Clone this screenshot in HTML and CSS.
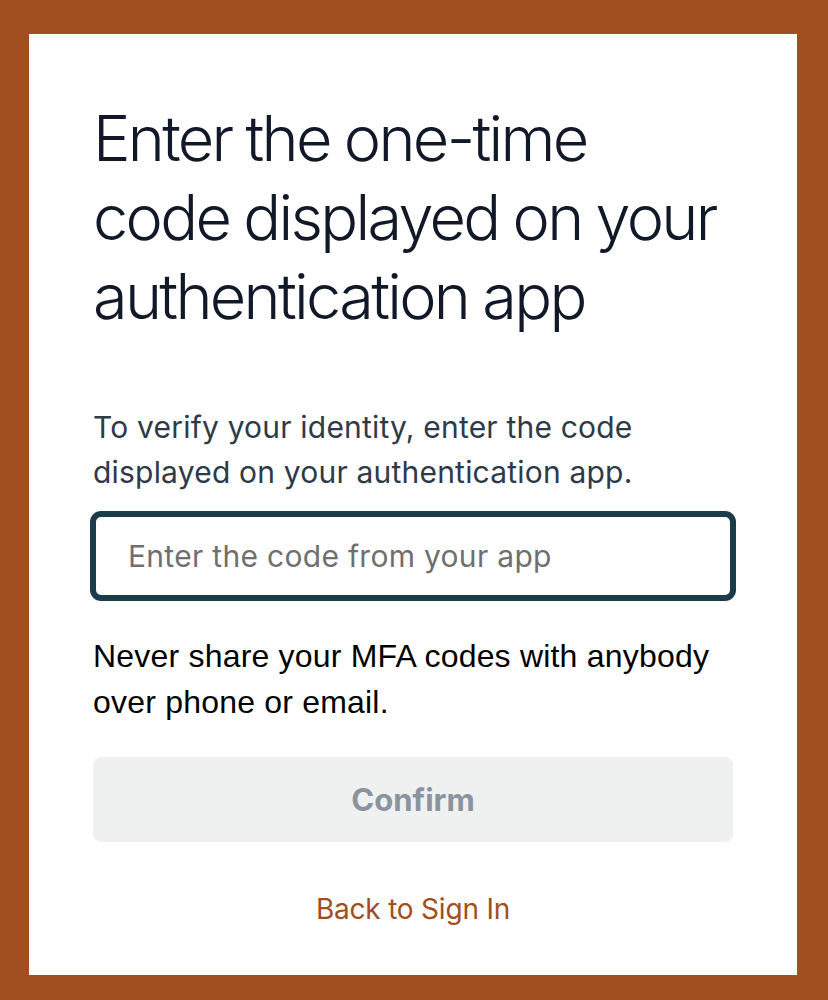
FILE: index.html
```html
<!DOCTYPE html>
<html lang="en">
<head>
<meta charset="utf-8">
<title>Confirm MFA</title>
<link rel="stylesheet" href="styles.css">
</head>
<body>
<main class="card">
  <h1 class="title">Enter the one-time code displayed on your authentication app</h1>
  <p class="lead">To verify your identity, enter the code displayed on your authentication app.</p>
  <input class="code-input" type="text" placeholder="Enter the code from your app">
  <p class="warning">Never share your MFA codes with anybody over phone or email.</p>
  <button class="confirm" type="button" disabled>Confirm</button>
  <a class="back" href="#">Back to Sign In</a>
</main>
</body>
</html>
```

FILE: styles.css
```css
html, body {
  margin: 0;
  padding: 0;
}
body {
  background: #a14f21;
  font-family: Inter, "Noto Sans", sans-serif;
  padding: 34px 31px 25px 29px;
}
.card {
  background: #ffffff;
  width: 768px;
  height: 941px;
  box-sizing: border-box;
  padding: 65px 64px 0 64px;
  display: flex;
  flex-direction: column;
}
.title {
  margin: 0;
  font-weight: 300;
  font-size: 63px;
  line-height: 79px;
  color: #111827;
  letter-spacing: -2.7px;
  word-spacing: -1px;
}
.lead {
  margin: 69px 0 0 0;
  font-size: 30px;
  line-height: 45px;
  letter-spacing: 0.2px;
  color: #2e3a48;
}
.code-input {
  margin: 19px 0 0 0;
  height: 84px;
  box-sizing: border-box;
  border: 3px solid #1b3d4b;
  box-shadow: 0 0 0 3px #1b3d4b;
  border-radius: 8px;
  padding: 0 32px;
  font-family: Inter, "Noto Sans", sans-serif;
  font-size: 30px;
  letter-spacing: 0.3px;
  color: #111827;
  outline: none;
}
.code-input::placeholder {
  color: #6f6f6f;
}
.warning {
  margin: 35px 0 0 0;
  font-family: "Liberation Sans", Arial, sans-serif;
  font-size: 32px;
  line-height: 46px;
  letter-spacing: 0.2px;
  color: #000000;
}
.confirm {
  margin: 32px 0 0 0;
  height: 85px;
  border: none;
  border-radius: 8px;
  background: #eff1f1;
  color: #8a949f;
  font-family: Inter, "Noto Sans", sans-serif;
  font-weight: 700;
  font-size: 31px;
}
.back {
  align-self: center;
  margin-top: 50px;
  font-size: 28px;
  letter-spacing: -0.2px;
  color: #a14f21;
  text-decoration: none;
}
```
